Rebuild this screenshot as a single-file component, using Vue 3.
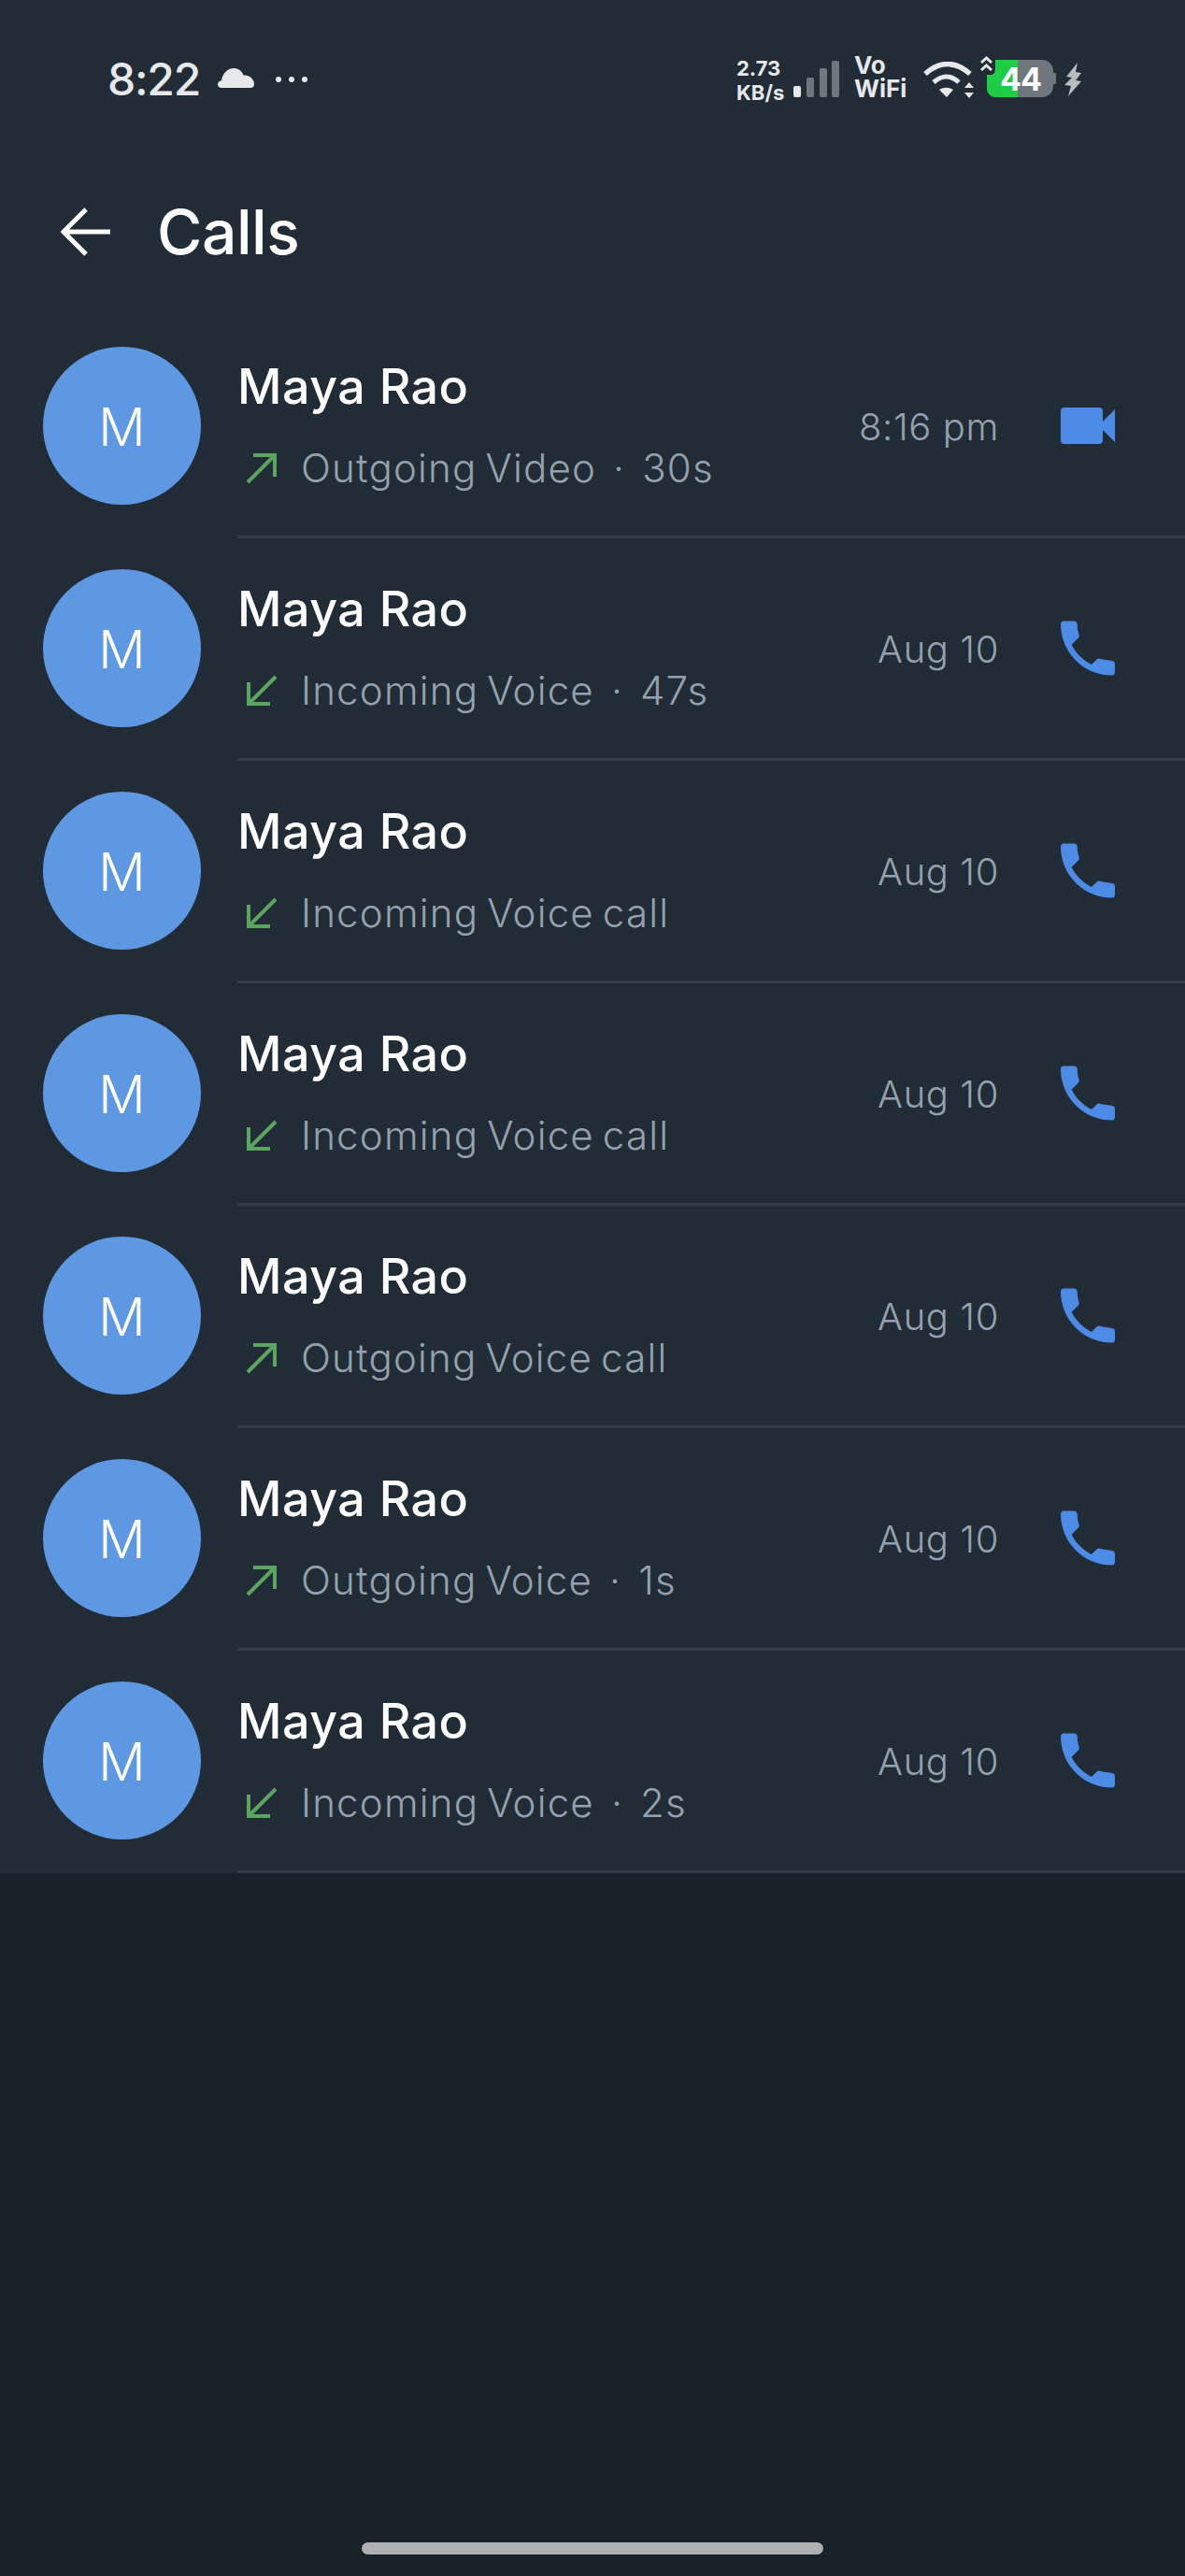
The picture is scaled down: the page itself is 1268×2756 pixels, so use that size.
<template>
  <div class="page">
    <div class="top">
      <div class="status">
        <div class="status__left">
          <span class="status__time">8:22</span>
          <svg class="status__cloud" width="39" height="21" viewBox="0 0 39 21">
            <path d="M4 21C1.500 21 0 19.400 0 17.200c0-2.300 1.700-3.800 4-4C5 5.500 10.500 0 17 0c5 0 9 3 10.500 7.500C33 6.700 39 11 39 17c0 2.500-1.500 4-4 4z" fill="#e6e8ea" />
          </svg>
          <div class="status__dots"><i></i><i></i><i></i></div>
        </div>
        <div class="status__right">
          <div class="speed">2.73<br />KB/s</div>
          <svg class="signal" width="49" height="39" viewBox="0 0 49 39">
            <rect x="0" y="27" width="8" height="12" rx="2" fill="#e6e8ea" />
            <rect x="14" y="18" width="8" height="21" rx="2" fill="#6f767d" />
            <rect x="28" y="8" width="8" height="31" rx="2" fill="#6f767d" />
            <rect x="41" y="0" width="8" height="39" rx="2" fill="#6f767d" />
          </svg>
          <div class="vowifi">Vo<br />WiFi</div>
          <svg class="wifi" width="54" height="39" viewBox="0 0 54 39">
            <path d="M2 13Q26-8 50 13" fill="none" stroke="#e6e8ea" stroke-width="5.500" />
            <path d="M11 22Q25 10 38 22" fill="none" stroke="#e6e8ea" stroke-width="5" />
            <path d="M17 30c5-3 10-3 15 0l-7 8z" fill="#e6e8ea" />
            <path d="M49 22l5 6H44zM49 39l-5-6h10z" fill="#e6e8ea" />
          </svg>
          <div class="battery">
            <svg width="81" height="46" viewBox="0 0 81 46">
              <path d="M16 4h50c7 0 12 5 12 12v2h1.500c1 0 1.500.5 1.500 1.500v9c0 1-.5 1.500-1.500 1.500H78v2c0 7-5 12-12 12H17c-6 0-10-4-10-10V20h4q5 0 5-6z" fill="#6f767d" />
              <path d="M16 4h24v40H17c-6 0-10-4-10-10V20h4q5 0 5-6z" fill="#1fcc45" />
              <path d="M1 7L6.500 2 12 7M1 15l5.500-5 5.500 5" fill="none" stroke="#e6e8ea" stroke-width="3" />
            </svg>
            <span class="battery__level">44</span>
          </div>
          <svg class="bolt" width="18" height="36" viewBox="0 0 18 36">
            <path d="M14 0L2 15l6 1-8 8 7 1-3 11L18 20l-6-1 6-8-6-1z" fill="#b9bcc0" />
          </svg>
        </div>
      </div>
      <div class="bar">
        <svg class="bar__back" width="53" height="52" viewBox="0 0 53 52">
          <path d="M53 26H4M27 2L3 26l24 24" fill="none" stroke="#fff" stroke-width="5" />
        </svg>
        <h1 class="bar__title">Calls</h1>
      </div>
    </div>

    <div class="list">
      <div v-for="(call, i) in calls" :key="i" class="row">
        <div class="row__avatar">M</div>
        <div class="row__body">
          <div class="row__text">
            <div class="row__name">Maya Rao</div>
            <div class="row__sub">
              <svg class="row__arrow" width="34" height="34" viewBox="0 0 34 34">
                <path v-if="call.out" d="M2 32L30 4M8 3h23v23" fill="none" stroke="#5ba55f" stroke-width="4" />
                <path v-else d="M32 2L4 30M3 8v23h23" fill="none" stroke="#5ba55f" stroke-width="4" />
              </svg>
              <span>{{ call.label }}</span>
            </div>
          </div>
          <span class="row__time">{{ call.time }}</span>
          <svg v-if="call.video" class="row__icon" width="58" height="40" viewBox="0 0 58 40">
            <rect x="0" y="0" width="45" height="39" rx="4" fill="#4c8ce6" />
            <path d="M45 15L58 2v35L45 24z" fill="#4c8ce6" />
          </svg>
          <svg v-else class="row__icon" width="58" height="59" viewBox="3 3 18 18">
            <path d="M6.600 10.800c1.400 2.800 3.800 5.100 6.600 6.600l1.800-1.700c.3-.3.7-.4 1-.2 1.100.4 2.900.5 4 .7.600.1 1 .4 1 1V20c0 .6-.4 1-1 1C10.600 21 3 13.400 3 4c0-.6.4-1 1-1h3.500c.6 0 1 .4 1 1 0 1.250.2 2.450.6 3.570.1.350 0 .740-.250 1.020z" fill="#4c8ce6" />
          </svg>
        </div>
      </div>
    </div>

    <div class="rest">
      <div class="home"></div>
    </div>
  </div>
</template>

<script setup>
const calls = [
  { out: true, label: 'Outgoing Video  ·  30s', time: '8:16 pm', video: true },
  { out: false, label: 'Incoming Voice  ·  47s', time: 'Aug 10' },
  { out: false, label: 'Incoming Voice call', time: 'Aug 10' },
  { out: false, label: 'Incoming Voice call', time: 'Aug 10' },
  { out: true, label: 'Outgoing Voice call', time: 'Aug 10' },
  { out: true, label: 'Outgoing Voice  ·  1s', time: 'Aug 10' },
  { out: false, label: 'Incoming Voice  ·  2s', time: 'Aug 10' }
]
</script>

<style>
html,
body {
  margin: 0;
  background: #19212b;
}
</style>

<style scoped>
.page {
  width: 1268px;
  height: 2756px;
  display: flex;
  flex-direction: column;
  background: #19212b;
  font-family: Inter, "Noto Sans", sans-serif;
  overflow: hidden;
}

.top,
.list {
  background: #222c37;
}

.top {
  height: 338px;
}

.status {
  height: 170px;
  padding: 0 111px 0 115px;
  display: flex;
  justify-content: space-between;
  box-sizing: border-box;
}

.status__left {
  display: flex;
  align-items: flex-start;
  padding-top: 55px;
  height: 60px;
}

.status__time {
  font-size: 48px;
  line-height: 60px;
  letter-spacing: -1.2px;
  font-weight: 500;
  color: #e6e8ea;
  width: 118px;
}

.status__cloud {
  margin-top: 18px;
}

.status__dots {
  display: flex;
  gap: 8px;
  margin: 27px 0 0 23px;
}

.status__dots i {
  width: 6px;
  height: 6px;
  border-radius: 50%;
  background: #e6e8ea;
}

.status__right {
  display: flex;
  align-items: flex-start;
  padding-top: 60px;
}

.speed {
  width: 61px;
  font-size: 22px;
  line-height: 26px;
  font-weight: 700;
  color: #e6e8ea;
}

.signal {
  margin-top: 5px;
}

.vowifi {
  margin-left: 16px;
  margin-top: -3px;
  width: 74px;
  font-size: 26px;
  line-height: 25px;
  font-weight: 700;
  color: #e6e8ea;
}

.wifi {
  margin-top: 6px;
}

.battery {
  position: relative;
  margin-left: 7px;
  width: 81px;
  height: 46px;
}

.battery svg {
  display: block;
}

.battery__level {
  position: absolute;
  left: 21px;
  top: 0;
  font-size: 34px;
  line-height: 50px;
  letter-spacing: -1px;
  font-weight: 700;
  color: #fff;
}

.bolt {
  margin: 7px 0 0 9px;
}

.bar {
  display: flex;
  align-items: center;
  height: 100px;
  margin-top: 28px;
  padding-left: 65px;
}

.bar__title {
  margin: 0 0 0 50px;
  font-size: 66px;
  line-height: 80px;
  font-weight: 500;
  letter-spacing: -.5px;
  color: #fff;
}

.row {
  display: flex;
  align-items: center;
  height: 238px;
  padding-left: 46px;
}

.row__avatar {
  flex: none;
  width: 169px;
  height: 169px;
  margin-top: -3px;
  border-radius: 50%;
  background: #5e98e3;
  color: #fff;
  font-size: 56px;
  font-weight: 300;
  padding-top: 3px;
  box-sizing: border-box;
  display: flex;
  align-items: center;
  justify-content: center;
}

.row__body {
  flex: 1;
  height: 238px;
  box-sizing: border-box;
  margin-left: 39px;
  padding-right: 75px;
  border-bottom: 3px solid #323c48;
  display: flex;
  align-items: center;
}

.row__text {
  flex: 1;
  margin-top: -3px;
}

.row__name {
  font-size: 52px;
  line-height: 64px;
  font-weight: 500;
  letter-spacing: .5px;
  color: #fff;
}

.row__sub {
  display: flex;
  align-items: center;
  margin-top: 29px;
  font-size: 42px;
  line-height: 52px;
  font-weight: 300;
  letter-spacing: 1.2px;
  word-spacing: -4px;
  color: #95a2ae;
  white-space: pre;
}

.row__arrow {
  margin: 0 25px 0 9px;
}

.row__time {
  font-size: 40px;
  font-weight: 300;
  letter-spacing: .6px;
  color: #95a2ae;
  padding-top: 2px;
}

.row__icon {
  flex: none;
  margin-left: 66px;
}

.rest {
  flex: 1;
  display: flex;
  justify-content: center;
}

.home {
  width: 494px;
  height: 13px;
  margin-top: 716px;
  border-radius: 7px;
  background: #aeb0b3;
}
</style>
